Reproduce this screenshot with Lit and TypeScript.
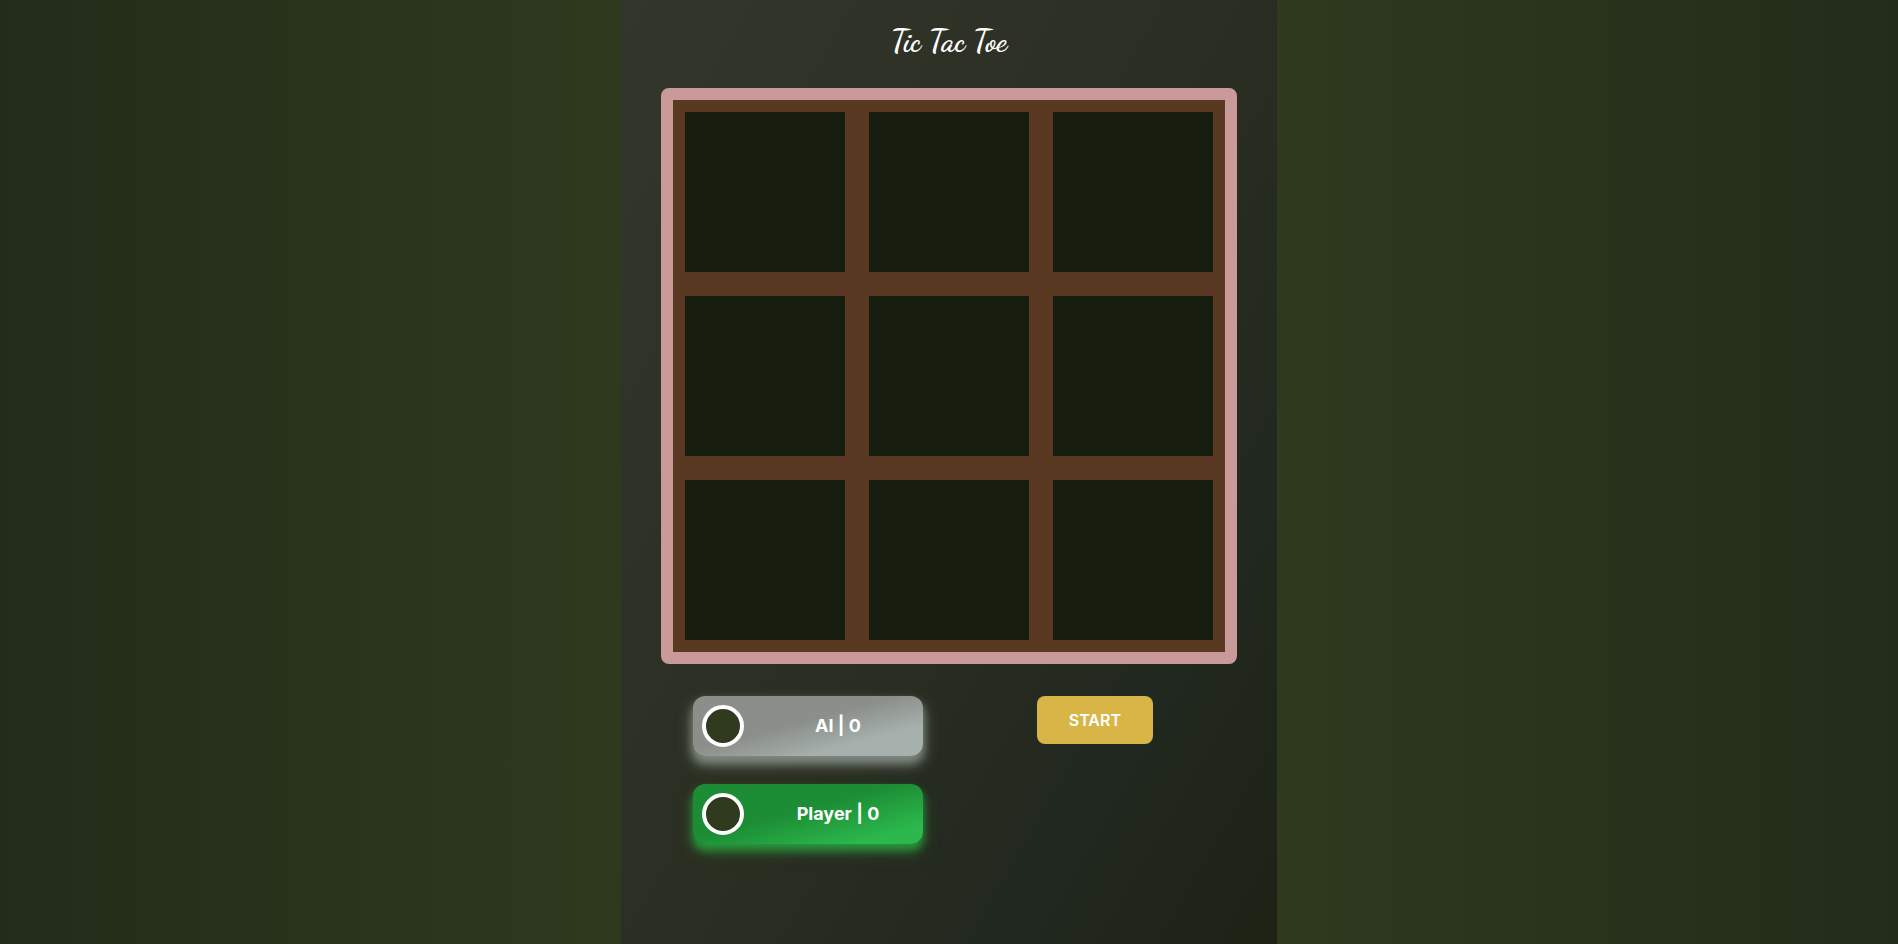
import { LitElement, html, css } from "lit";
import { customElement, property, state } from "lit/decorators.js";

@customElement("score-badge")
class ScoreBadge extends LitElement {
  @property() name = "";
  @property({ type: Number }) score = 0;
  @property() tone = "silver";

  static styles = css`
    .badge {
      display: flex;
      align-items: center;
      box-sizing: border-box;
      width: 230px;
      height: 60px;
      padding: 0 9px;
      border: 0;
      border-radius: 12px;
      color: #fff;
      font: 700 18px/24px Inter, sans-serif;
      cursor: pointer;
    }
    .silver {
      background: linear-gradient(165deg, #8b8f8a 0%, #8b8f8a 45%, #a6b0ad 75%, #a6b0ad 100%);
      box-shadow: 0 6px 8px #7f8881, 0 8px 16px rgba(150, 164, 154, 0.6);
    }
    .green {
      background: linear-gradient(165deg, #1c8d34 0%, #1c8d34 45%, #2cb84d 85%, #2cb84d 100%);
      box-shadow: 0 6px 8px #27973d, 0 8px 16px rgba(44, 130, 50, 0.5);
    }
    .mark {
      box-sizing: border-box;
      width: 42px;
      height: 42px;
      border: 4px solid #fff;
      border-radius: 50%;
      background: #2f3a1f;
    }
    .text {
      flex: 1;
      padding-left: 18px;
      text-align: center;
    }
  `;

  render() {
    return html`<button class="badge ${this.tone}">
      <span class="mark"></span>
      <span class="text">${this.name} | ${this.score}</span>
    </button>`;
  }
}

@customElement("app-root")
class AppRoot extends LitElement {
  @state() cells: string[] = Array(9).fill("");

  static styles = css`
    :host {
      display: flex;
      justify-content: center;
      min-height: 100vh;
      background: linear-gradient(90deg, #232c19 0%, #2f391e 32%, #2f391e 68%, #232c19 100%);
      font-family: Inter, sans-serif;
    }
    .game {
      box-sizing: border-box;
      width: 100%;
      max-width: 656px;
      padding: 20px 40px;
      background: linear-gradient(120deg, #33372b 0%, #2b2e22 50%, #21281f 78%, #1e2215 100%);
    }
    .title {
      margin: 0 0 26px;
      color: #fff;
      font: 700 30px/42px "Dancing Script", cursive;
      text-align: center;
    }
    .board {
      display: grid;
      grid-template-columns: repeat(3, 1fr);
      gap: 24px;
      padding: 12px;
      border: 12px solid #ca9a9a;
      border-radius: 8px;
      background: #593921;
    }
    .cell {
      aspect-ratio: 1;
      padding: 0;
      border: 0;
      background: #171e10;
      cursor: pointer;
    }
    .panel {
      display: flex;
      flex-wrap: wrap;
      justify-content: space-between;
      align-items: flex-start;
      gap: 28px;
      padding: 32px 84px 0 32px;
    }
    .scores {
      display: grid;
      gap: 28px;
    }
    .start {
      height: 48px;
      padding: 0 32px;
      border: 0;
      border-radius: 8px;
      background: #d9b547;
      color: #fff;
      font: 600 16px/24px Inter, sans-serif;
      cursor: pointer;
    }
  `;

  render() {
    return html`<main class="game">
      <h1 class="title">Tic Tac Toe</h1>
      <div class="board">
        ${this.cells.map((mark, i) => html`<button class="cell" aria-label="Cell ${i + 1}">${mark}</button>`)}
      </div>
      <div class="panel">
        <div class="scores">
          <score-badge name="AI" score="0" tone="silver"></score-badge>
          <score-badge name="Player" score="0" tone="green"></score-badge>
        </div>
        <button class="start">START</button>
      </div>
    </main>`;
  }
}
